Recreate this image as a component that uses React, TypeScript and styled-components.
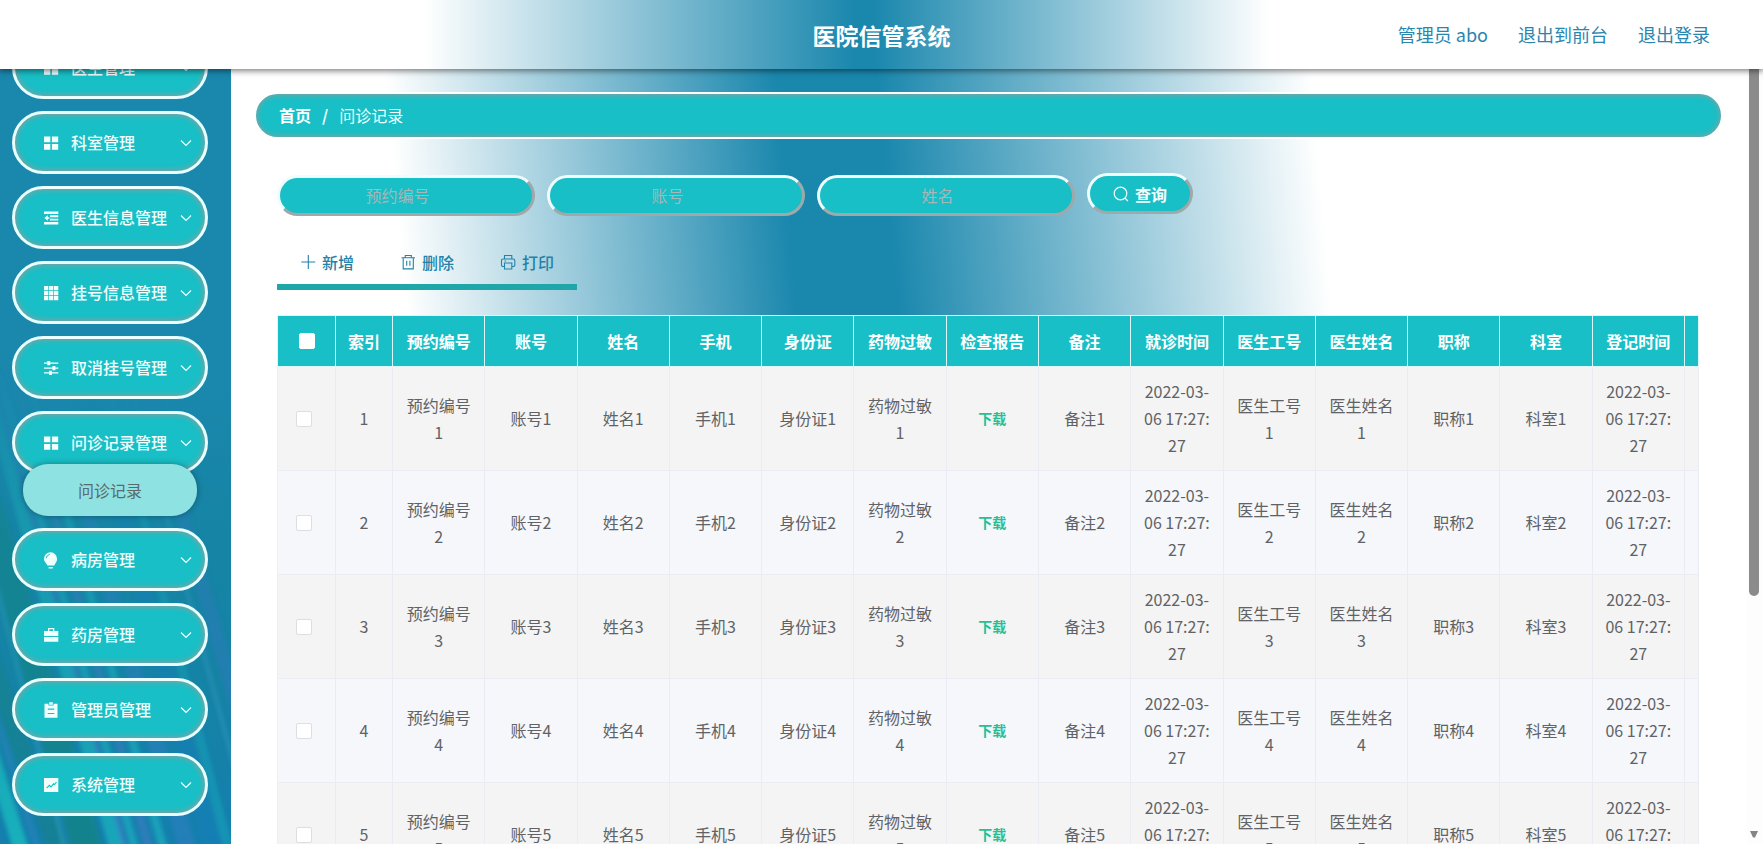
import React from "react";
import styled, { createGlobalStyle } from "styled-components";

const teal = "#18bfc6";
const blue = "#1a87ad";

const GlobalStyle = createGlobalStyle`
  *, *::before, *::after { box-sizing: border-box; }
  body {
    margin: 0;
    background: #fff;
    color: #606266;
    font-family: "Noto Sans CJK SC", "Noto Sans", sans-serif;
    font-size: 16px;
    line-height: 27px;
  }
  button, input { font: inherit; }
  a { color: inherit; text-decoration: none; }
`;

const Shell = styled.div`
  height: 100vh;
  display: flex;
  flex-direction: column;
  overflow: hidden;
`;

const Header = styled.header`
  flex: none;
  height: 69px;
  display: grid;
  grid-template-columns: 1fr auto 1fr;
  align-items: center;
  padding: 0 53px;
  background: linear-gradient(90deg, #fff 24%, ${blue} 48.5%, ${blue} 49.5%, #fff 72%);
  box-shadow: 0 1px 6px 1px rgba(0, 0, 0, 0.5);
  z-index: 2;
`;

const Title = styled.h1`
  grid-column: 2;
  margin: 0;
  font-size: 23px;
  line-height: 36px;
  font-weight: 700;
  color: #fff;
`;

const UserNav = styled.nav`
  display: flex;
  justify-content: flex-end;
  gap: 30px;
  font-size: 18px;
  color: #2a86ad;
  white-space: nowrap;
`;

const Body = styled.div`
  flex: 1;
  min-height: 0;
  display: flex;
`;

const Sidebar = styled.aside`
  position: relative;
  flex: none;
  width: 231px;
  padding: 0 23px 0 12px;
  overflow: hidden;
  background: linear-gradient(180deg, ${blue} 0%, ${blue} 40%, #1684a4 60%, #1583a6 80%, #157fae 100%);
`;

const Streaks = styled.svg`
  position: absolute;
  inset: 0;
  width: 100%;
  height: 100%;
`;

const MenuList = styled.ul`
  position: relative;
  display: flex;
  flex-direction: column;
  gap: 12px;
  margin: -33px 0 0;
  padding: 0;
  list-style: none;
`;

const MenuButton = styled.button`
  display: flex;
  align-items: center;
  gap: 12px;
  width: 100%;
  height: 63px;
  padding: 0 13px 0 28px;
  border: 3px solid #eaffff;
  border-radius: 32px;
  background: ${teal};
  box-shadow: inset 0 0 5px 1px #8f9c9c;
  color: #f2ffff;
  font-weight: 500;
  text-align: left;
  cursor: pointer;
`;

const MenuLabel = styled.span`
  flex: 1;
  white-space: nowrap;
`;

const SubMenuLink = styled.a`
  position: relative;
  display: block;
  height: 52px;
  margin: -10px 11px 0;
  border-radius: 25px;
  background: #8fe2e2;
  box-shadow: 0 0 6px rgba(0, 0, 0, 0.35);
  color: #586a6b;
  line-height: 53px;
  text-align: center;
`;

const Main = styled.main`
  flex: 1;
  min-width: 0;
  padding: 23px 24px 0 23px;
  overflow: hidden;
  background: linear-gradient(85deg, #fff 14%, ${blue} 38.7%, ${blue} 45%, #fff 72.5%);
`;

const Breadcrumb = styled.nav`
  display: flex;
  align-items: center;
  height: 47px;
  padding: 0 23px;
  border: 2px solid #fff;
  border-radius: 24px;
  background: ${teal};
  box-shadow: inset 0 0 5px 1px #8f9c9c;
  color: #f2ffff;
`;

const HomeLink = styled.a`
  font-weight: 700;
  color: #fff;
`;

const Separator = styled.span`
  margin: 0 11px;
  font-weight: 700;
`;

const Panel = styled.section`
  padding: 34px 24px 0 23px;
`;

const SearchForm = styled.form`
  display: flex;
  gap: 12px;
  height: 43px;
`;

const raised = `
  border: 3px solid;
  border-color: #eefcff #a0a9a9 #a0a9a9 #eefcff;
  border-radius: 21px;
  background: ${teal};
`;

const SearchInput = styled.input`
  ${raised}
  align-self: flex-end;
  width: 258px;
  height: 41px;
  padding: 0 32px 2px 15px;
  color: #fff;
  text-align: center;
  outline: none;
  &::placeholder { color: #a9b6b8; opacity: 1; }
`;

const SearchButton = styled.button`
  ${raised}
  display: flex;
  align-items: center;
  justify-content: center;
  gap: 6px;
  width: 106px;
  height: 41px;
  padding: 1px 0 0;
  color: #f6ffff;
  font-weight: 700;
`;

const Toolbar = styled.div`
  display: inline-flex;
  margin-top: 24px;
  border-bottom: 6px solid #1fa6a9;
  vertical-align: top;
`;

const ToolButton = styled.button`
  display: flex;
  align-items: center;
  gap: 6px;
  height: 44px;
  padding: 0 23px;
  border: 0;
  background: none;
  color: #2382a8;
  font-weight: 500;
`;

const Table = styled.table`
  width: 100%;
  margin-top: 25px;
  table-layout: fixed;
  border-collapse: separate;
  border-spacing: 0;
  border-top: 1px solid #ebeef5;
  border-left: 1px solid #ebeef5;
  text-align: center;
`;

const Col = styled.col<{ $w?: number }>`
  ${(p) => (p.$w ? `width: ${p.$w}px;` : "")}
`;

const Th = styled.th`
  height: 51px;
  padding: 0;
  border-right: 1px solid #dff7f9;
  border-bottom: 1px solid #dff7f9;
  background: ${teal};
  color: #fff;
  font-weight: 700;
  white-space: nowrap;
`;

const Row = styled.tr`
  background: #f4f4f4;
  &:nth-child(even) { background: #f5f7fb; }
`;

const Td = styled.td<{ $tight?: boolean }>`
  height: 104px;
  padding: ${(p) => (p.$tight ? "0 5px 0 0" : "0 12px")};
  border-right: 1px solid #e9ecf3;
  border-bottom: 1px solid #e9ecf3;
  word-break: break-all;
`;

const EdgeTd = styled(Td)`
  padding: 0;
`;

const Check = styled.input`
  appearance: none;
  display: block;
  width: 16px;
  height: 16px;
  margin: 0 auto;
  border: 1px solid #dcdfe2;
  border-radius: 2px;
  background: #fff;
`;

const HeadCheck = styled(Check)`
  border-color: #fff;
`;

const Download = styled.button`
  display: block;
  margin: 0 auto;
  padding: 0;
  border: 0;
  background: none;
  color: #24c096;
  font-size: 14px;
  line-height: 27px;
  font-weight: 700;
`;

const ScrollRail = styled.div`
  flex: none;
  width: 16px;
  display: flex;
  flex-direction: column;
  justify-content: space-between;
  align-items: center;
  padding: 0 2px 6px 0;
  background: #fdfdfd;
`;

const ScrollThumb = styled.div`
  width: 10px;
  height: 69%;
  margin-top: -4px;
  border-radius: 5px;
  background: #8b8b8b;
`;

const icons: Record<string, React.ReactNode> = {
  menu: <path d="M1 1.500h6.300v5.800H1zM8.900 1.500h6.300v5.800H8.900zM1 9h6.300v5.800H1zM8.900 9h6.300v5.800H8.900z" />,
  fold: <path d="M1 1.500h14.300v2.400H1zM7 5.300h8.300v1.900H7zM7 8.700h8.300v1.900H7zM1 12.100h14.300v2.400H1zM4.800 5.200v2h1.600v1.600H4.800v2L1.300 8z" />,
  grid: <path d="M1 1h4.300v4.300H1zM6 1h4.300v4.300H6zM11 1h4.300v4.300H11zM1 6h4.300v4.300H1zM6 6h4.300v4.300H6zM11 6h4.300v4.300H11zM1 11h4.300v4.300H1zM6 11h4.300v4.300H6zM11 11h4.300v4.300H11z" />,
  operation: <path d="M1 2.500h3.300V1h2.900v1.500h8.100v1.300H7.200v1.500H4.300V3.800H1zM1 7.400h8.500V5.900h2.900v1.500h2.900v1.300h-2.900v1.500H9.500V8.700H1zM1 12.300h5V10.800h2.900v1.500h6.400v1.300H8.900v1.500H6v-1.500H1z" />,
  bulb: <><path d="M7.500 0.300a6.600 6.600 0 0 1 6.600 6.600c0 2.700-1.700 4-2.800 6.600H4.400C3.300 10.900 0.900 9.600 0.900 6.900A6.600 6.600 0 0 1 7.500 0.300zM5.600 15h4.200v1.500H5.600z" /><path d="M3.200 6.300A4.600 4.600 0 0 1 6.800 2.400" fill="none" stroke={teal} /></>,
  briefcase: <path fillRule="evenodd" d="M5 1h6.300v3h4v5H1V4h4zM6.300 2.300V4H10V2.300zM1 10h14.300v4.800H1z" />,
  clipboard: <><path d="M1.500 1.800h3.900v1.800h5.200V1.800h3.900v14h-13zM6.200 0.300h3.600v2.400H6.200z" /><path d="M4.700 7.200h6.600M4.700 11.500h6.600" stroke={teal} strokeWidth="1.200" /></>,
  chart: <><path d="M1 1h14.300v14H1z" /><path d="M3.600 11.200 6.300 8.300l1.900 1.600 2.400-3.200 1 .800 1.900-2.500" fill="none" stroke={teal} strokeWidth="1.100" /></>,
  plus: <path d="M8.300 1v14M1.300 8h14" fill="none" stroke="currentColor" strokeWidth="1.100" />,
  trash: <path d="M1.500 3.700h13.500M5.300 3.700V1.500h6v2.200M3.200 3.700v11.200h10.100V3.700M6.700 6.800v5M9.900 6.800v5" fill="none" stroke="currentColor" strokeWidth="1.100" />,
  print: <path d="M4.500 5V1.500h7.300V5M4.500 12.500H3a1.500 1.500 0 0 1-1.500-1.500V6.500A1.500 1.500 0 0 1 3 5h10.300a1.500 1.500 0 0 1 1.500 1.500V11a1.500 1.500 0 0 1-1.500 1.500h-1.500M4.500 9h7.300v6H4.500zM4.500 7h1.600" fill="none" stroke="currentColor" strokeWidth="1.100" />,
  search: <path d="M7.500 1.200a6.300 6.300 0 1 0 0 12.600 6.300 6.300 0 0 0 0-12.600zM11.900 12l3 3" fill="none" stroke="currentColor" strokeWidth="1.200" />,
};

const Icon = ({ name }: { name: string }) => (
  <svg width="16" height="16" viewBox="0 0 16 16" fill="currentColor" overflow="visible" aria-hidden="true">
    {icons[name]}
  </svg>
);

const Chevron = () => (
  <svg width="12" height="12" viewBox="0 0 12 12" fill="none" stroke="currentColor" strokeWidth="1.200" aria-hidden="true">
    <path d="M1 3.500l5 5 5-5" />
  </svg>
);

const menu = [
  { icon: "menu", label: "医生管理" },
  { icon: "menu", label: "科室管理" },
  { icon: "fold", label: "医生信息管理" },
  { icon: "grid", label: "挂号信息管理" },
  { icon: "operation", label: "取消挂号管理" },
  { icon: "menu", label: "问诊记录管理", child: "问诊记录" },
  { icon: "bulb", label: "病房管理" },
  { icon: "briefcase", label: "药房管理" },
  { icon: "clipboard", label: "管理员管理" },
  { icon: "chart", label: "系统管理" },
];

const time = "2022-03-06 17:27:27";
const columns = [
  "预约编号", "账号", "姓名", "手机", "身份证", "药物过敏", "检查报告",
  "备注", "就诊时间", "医生工号", "医生姓名", "职称", "科室", "登记时间",
];

const cell = (column: string, n: number): React.ReactNode => {
  if (column === "检查报告") return <Download type="button">下载</Download>;
  if (column.endsWith("时间")) return time;
  return column + n;
};

/* x at the top, top y, x at the bottom, width, colour, opacity */
const streaks: [number, number, number, number, string, number][] = [
  [-110, 330, 50, 22, "#12817f", 0.5],
  [-96, 420, 16, 16, "#17b9bd", 0.85],
  [-78, 420, 38, 6, "#2f86c4", 0.5],
  [-62, 300, 66, 3, "#3db3c4", 0.5],
  [-60, 300, 74, 32, "#12857f", 0.7],
  [-30, 280, 112, 16, "#19b3bd", 0.75],
  [-16, 280, 126, 5, "#3a7fc4", 0.8],
  [-8, 290, 134, 8, "#1bb0c0", 0.7],
  [4, 280, 148, 8, "#3c7cc0", 0.7],
  [16, 280, 162, 9, "#1db4c0", 0.65],
  [34, 290, 182, 18, "#2b7fc0", 0.6],
  [70, 280, 206, 20, "#187fb8", 0.6],
  [96, 280, 226, 10, "#1aa6bc", 0.55],
  [120, 280, 258, 3, "#45a3cc", 0.6],
  [130, 280, 272, 16, "#3478bc", 0.6],
];

export default function App() {
  return (
    <Shell>
      <GlobalStyle />
      <Header>
        <Title>医院信管系统</Title>
        <UserNav aria-label="用户">
          <a href="#admin">管理员 abo</a>
          <a href="#front">退出到前台</a>
          <a href="#logout">退出登录</a>
        </UserNav>
      </Header>
      <Body>
        <Sidebar>
          <Streaks viewBox="0 0 231 775" preserveAspectRatio="none" aria-hidden="true">
            <defs>
              <filter id="soft" x="-20%" y="-5%" width="140%" height="110%">
                <feGaussianBlur stdDeviation="2" />
              </filter>
              <linearGradient id="fade" x1="0" y1="0" x2="0" y2="1">
                <stop offset="0.380" stopColor="#000" />
                <stop offset="0.600" stopColor="#999" />
                <stop offset="1" stopColor="#fff" />
              </linearGradient>
              <mask id="fadeMask" maskUnits="userSpaceOnUse" x="0" y="0" width="231" height="775">
                <rect width="231" height="775" fill="url(#fade)" />
              </mask>
            </defs>
            <g mask="url(#fadeMask)">
              <g filter="url(#soft)">
                {streaks.map(([x1, y, x2, w, c, o]) => (
                  <path key={`${x1}-${x2}`} d={`M${x1} ${y}h${w * 0.7}L${x2 + w} 790H${x2}z`} fill={c} opacity={o} />
                ))}
              </g>
            </g>
          </Streaks>
          <MenuList>
            {menu.map((m) => (
              <li key={m.label}>
                <MenuButton type="button">
                  <Icon name={m.icon} />
                  <MenuLabel>{m.label}</MenuLabel>
                  <Chevron />
                </MenuButton>
                {m.child && <SubMenuLink href="#records">{m.child}</SubMenuLink>}
              </li>
            ))}
          </MenuList>
        </Sidebar>
        <Main>
          <Breadcrumb aria-label="面包屑">
            <HomeLink href="#home">首页</HomeLink>
            <Separator>/</Separator>
            <span>问诊记录</span>
          </Breadcrumb>
          <Panel>
            <SearchForm onSubmit={(e) => e.preventDefault()}>
              {["预约编号", "账号", "姓名"].map((p) => (
                <SearchInput key={p} type="text" placeholder={p} aria-label={p} />
              ))}
              <SearchButton type="submit">
                <Icon name="search" />
                查询
              </SearchButton>
            </SearchForm>
            <Toolbar>
              <ToolButton type="button"><Icon name="plus" />新增</ToolButton>
              <ToolButton type="button"><Icon name="trash" />删除</ToolButton>
              <ToolButton type="button"><Icon name="print" />打印</ToolButton>
            </Toolbar>
            <Table>
              <colgroup>
                <Col $w={58} />
                <Col $w={57} />
                {columns.map((c) => <Col key={c} />)}
                <Col $w={14} />
              </colgroup>
              <thead>
                <tr>
                  <Th><HeadCheck type="checkbox" aria-label="全选" /></Th>
                  <Th>索引</Th>
                  {columns.map((c) => <Th key={c}>{c}</Th>)}
                  <Th />
                </tr>
              </thead>
              <tbody>
                {[1, 2, 3, 4, 5].map((n) => (
                  <Row key={n}>
                    <Td $tight><Check type="checkbox" aria-label={`选择 ${n}`} /></Td>
                    <Td>{n}</Td>
                    {columns.map((c) => <Td key={c}>{cell(c, n)}</Td>)}
                    <EdgeTd />
                  </Row>
                ))}
              </tbody>
            </Table>
          </Panel>
        </Main>
        <ScrollRail aria-hidden="true">
          <ScrollThumb />
          <svg width="8" height="7" viewBox="0 0 8 7" fill="#858585"><path d="M0 0h8L5 6.500H3z" /></svg>
        </ScrollRail>
      </Body>
    </Shell>
  );
}
